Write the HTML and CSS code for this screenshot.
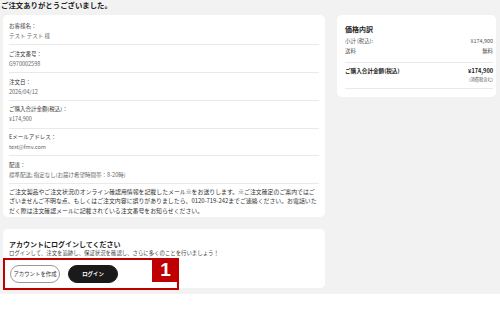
FILE: index.html
```html
<!DOCTYPE html>
<html lang="ja">
<head>
  <meta charset="utf-8">
  <title>ご注文完了</title>
  <link rel="stylesheet" href="styles.css">
</head>
<body>
<div class="page">
  <h1 class="page-title">ご注文ありがとうございました。</h1>
  <div class="layout">
    <div class="main">
      <section class="card order">
        <dl class="info">
          <div class="info-row"><dt>お客様名：</dt><dd>テスト テスト 様</dd></div>
          <div class="info-row"><dt>ご注文番号：</dt><dd>G970002598</dd></div>
          <div class="info-row"><dt>注文日：</dt><dd>2026/04/12</dd></div>
          <div class="info-row"><dt>ご購入合計金額(税込)：</dt><dd>¥174,900</dd></div>
          <div class="info-row"><dt>Eメールアドレス：</dt><dd>test@fmv.com</dd></div>
          <div class="info-row"><dt>配達：</dt><dd>標準配送; 指定なし(お届け希望時間帯：8-20時)</dd></div>
        </dl>
        <p class="notice">ご注文製品やご注文状況のオンライン確認用情報を記載したメール※をお送りします。※ご注文確定のご案内ではございませんご不明な点、もしくはご注文内容に誤りがありましたら、0120-719-242までご連絡ください。お電話いただく際は注文確認メールに記載されている注文番号をお知らせください。</p>
      </section>

      <section class="card login">
        <h2 class="login-title">アカウントにログインしてください</h2>
        <p class="login-text">ログインして、注文を追跡し、保証状況を確認し、さらに多くのことを行いましょう！</p>
        <div class="login-actions">
          <button class="btn btn-outline">アカウントを作成</button>
          <button class="btn btn-dark">ログイン</button>
        </div>
        <div class="mark"><span class="mark-num">1</span></div>
      </section>
    </div>

    <aside class="card price">
      <h3 class="price-title">価格内訳</h3>
      <div class="price-row"><span>小計 (税込):</span><span>¥174,900</span></div>
      <div class="price-row"><span>送料</span><span>無料</span></div>
      <div class="price-total">
        <span>ご購入合計金額(税込)</span>
        <div class="price-total-val">
          <span>¥174,900</span>
          <small>(消費税含む)</small>
        </div>
      </div>
    </aside>
  </div>
</div>
</body>
</html>
```

FILE: styles.css
```css
* {
  box-sizing: border-box;
}
body {
  margin: 0;
  background: #fff;
  font-family: "Noto Sans CJK JP", "Noto Sans", sans-serif;
  color: #222;
}
.page {
  background: #f2f2f2;
  padding: 0 4px 6px 3px;
}
.page-title {
  margin: 0 0 6px -2px;
  font-size: 7.4px;
  line-height: 9px;
  font-weight: 700;
}
.layout {
  display: flex;
  gap: 12px;
  align-items: flex-start;
}
.main {
  width: 322px;
  display: flex;
  flex-direction: column;
  gap: 12px;
}
.card {
  background: #fff;
  border-radius: 5px;
}

/* order info */
.order {
  padding: 2.5px 6px 2.5px;
}
.info {
  margin: 0;
}
.info-row {
  padding: 3.5px 0 3.25px;
  border-bottom: 1px solid #e9e9e9;
}
.info-row dt,
.info-row dd {
  margin: 0;
  font-size: 5.5px;
  line-height: 10px;
}
.info-row dt {
  color: #333;
}
.info-row dd {
  color: #666;
}
.notice {
  margin: 3px 0 0;
  font-size: 5.9px;
  line-height: 9.3px;
  color: #333;
}

/* login */
.login {
  position: relative;
  padding: 10px 6px 5px;
}
.login-title {
  margin: 0;
  font-size: 7px;
  line-height: 10px;
  font-weight: 700;
}
.login-text {
  margin: 0;
  font-size: 5.4px;
  line-height: 9px;
  color: #444;
}
.login-actions {
  display: flex;
  gap: 8px;
  margin-top: 7px;
  padding-left: 1px;
}
.btn {
  width: 50px;
  height: 18px;
  border-radius: 9px;
  font-family: inherit;
  font-size: 5.4px;
  padding: 0;
}
.btn-outline {
  background: #fff;
  border: 1px solid #999;
  color: #333;
}
.btn-dark {
  background: #1a1a1a;
  border: 1px solid #1a1a1a;
  color: #fff;
  font-weight: 700;
}
.mark {
  position: absolute;
  left: 0;
  top: 29px;
  width: 176px;
  height: 32px;
  border: 2px solid #c00000;
}
.mark-num {
  position: absolute;
  right: -2px;
  top: -2px;
  width: 27px;
  height: 24px;
  background: #c00000;
  color: #fff;
  font-family: "Liberation Sans", sans-serif;
  font-weight: 700;
  font-size: 19px;
  line-height: 24px;
  text-align: center;
}

/* price */
.price {
  width: 159px;
  padding: 9px 3px 8px 8px;
}
.price-title {
  margin: 0 0 2px;
  font-size: 7px;
  line-height: 10px;
  font-weight: 700;
}
.price-row {
  display: flex;
  justify-content: space-between;
  font-size: 5.4px;
  line-height: 10px;
  color: #555;
}
.price-total {
  display: flex;
  justify-content: space-between;
  align-items: flex-start;
  margin-top: 5.5px;
  padding: 4.5px 0 5.5px;
  border-top: 1px solid #e9e9e9;
  border-bottom: 1px solid #e9e9e9;
  font-size: 5.6px;
  font-weight: 700;
  line-height: 9px;
}
.price-total-val {
  display: flex;
  flex-direction: column;
  align-items: flex-end;
}
.price-total-val small {
  font-size: 4.2px;
  line-height: 6px;
  font-weight: 400;
  color: #555;
}
```
